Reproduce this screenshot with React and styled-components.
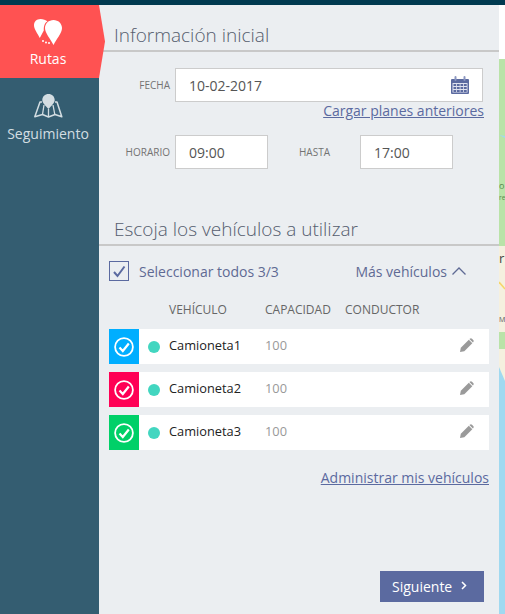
import React from "react";
import styled, { createGlobalStyle } from "styled-components";

const Global = createGlobalStyle`
  html, body { margin: 0; padding: 0; background: #fff; }
  body { font-family: "Open Sans", "Liberation Sans", sans-serif; }
  a { color: inherit; }
`;

const Page = styled.div`
  width: 505px; height: 614px; overflow: hidden;
  display: grid; grid-template-rows: 5px 1fr; grid-template-columns: 99px 400px 6px;
`;
const TopBar = styled.div`grid-column: 1 / -1; background: #003a50;`;
const Sidebar = styled.nav`background: #345d71; display: flex; flex-direction: column; position: relative; z-index: 1;`;
const NavItem = styled.a`
  display: flex; flex-direction: column; align-items: center; box-sizing: border-box;
  height: ${p => p.$active ? 73 : 72}px;
  padding: ${p => p.$active ? 13 : 15}px 3px 0 0;
  position: relative;
  color: ${p => p.$active ? "#fff" : "#d3dde2"};
  background: ${p => p.$active ? "#ff5252" : "transparent"};
  font-size: 14px; line-height: 19px;
  span { margin-top: ${p => p.$active ? 4 : 5}px; }
  ${p => p.$active && `&::after {
    content: ""; position: absolute; left: 99px; top: 0; width: 6px; height: 73px;
    background: #ff5252; clip-path: polygon(0 0, 100% 50%, 0 100%);
  }`}
`;
const Panel = styled.main`background: #ebeef1; display: flex; flex-direction: column; position: relative;`;
const SectionTitle = styled.h2`
  margin: 0; height: ${p => p.$h}px; box-sizing: border-box; border-bottom: 2px solid #c8c8c8;
  padding-left: 15px; font-weight: 300; font-size: 19px; line-height: 27px; color: #555d6e;
  display: flex; align-items: flex-end; padding-bottom: 1px;
`;
const Fields = styled.div`display: flex; flex-direction: column; padding-top: 16px; height: 143px; box-sizing: border-box;`;
const FieldRow = styled.div`display: flex; align-items: center; height: 34px;`;
const Label = styled.label`
  width: ${p => p.$w}px; padding-right: ${p => p.$pr ?? 5}px; box-sizing: border-box; text-align: ${p => p.$left ? "left" : "right"};
  padding-left: ${p => p.$left ? 31 : 0}px;
  font-size: 10px; color: #737373;
`;
const Input = styled.div`
  width: ${p => p.$w}px; height: 34px; box-sizing: border-box; background: #fff; border: 1px solid #ccc;
  padding: 0 13px; display: flex; align-items: center; justify-content: space-between;
  font-size: 14px; color: #555;
`;
const LinkRow = styled.div`
  display: flex; justify-content: flex-end; padding-right: ${p => p.$pr}px; font-size: 14px; line-height: 20px; color: #5b6aa0;
  margin: ${p => p.$m};
  a { text-decoration: underline; }
`;
const SelectRow = styled.div`display: flex; align-items: center; padding: 15px 0 0 10px; height: 20px; font-size: 14px; color: #5f6a94;`;
const CheckBox = styled.div`width: 20px; height: 20px; box-sizing: border-box; border: 1px solid #5b6aa0; display: flex; align-items: center; justify-content: center; margin-right: 10px;`;
const More = styled.div`margin-left: auto; margin-right: 33px; display: flex; align-items: center; gap: 5px;`;
const TableHead = styled.div`
  display: grid; grid-template-columns: 96px 80px 1fr; padding: 20px 0 0 70px; height: 17px; line-height: 17px;
  font-size: 12px; color: #666;
`;
const Rows = styled.div`display: flex; flex-direction: column; gap: 8px; padding: 11px 10px 0;`;
const Row = styled.div`display: flex; align-items: center; height: 35px; background: #fff; font-size: 12.800px; color: #222;`;
const Swatch = styled.div`width: 30px; height: 35px; background: ${p => p.$c}; display: flex; align-items: center; justify-content: center; margin-right: 9px;`;
const Dot = styled.i`width: 12px; height: 12px; border-radius: 50%; background: #42d6c0; margin-right: 9px;`;
const Name = styled.div`width: 96px; margin-bottom: 3px;`;
const Cap = styled.div`color: #999; margin-bottom: 3px;`;
const Edit = styled.div`margin: 0 15px 3px auto; display: flex;`;
const Footer = styled.div`display: flex; justify-content: flex-end; margin-top: auto; padding: 0 15px 12px 0;`;
const NextButton = styled.button`
  width: 104px; height: 31px; border: 0; background: #5b6aa0; color: #fff; font: 14px "Open Sans", sans-serif;
  display: flex; align-items: center; padding: 0 0 0 12px; gap: 9px;
  svg { margin-bottom: 3px; }
`;
const MapStrip = styled.svg`display: block; width: 6px; height: 609px;`;
const MapLabel = styled.text`font: ${p => p.$s}px "Open Sans", sans-serif; fill: ${p => p.$c};`;

const Balloons = () => (
  <svg width="30" height="27" viewBox="0 0 30 27">
    <path d="M7.500 1C3.500 1 1 3.800 1 7.200c0 4 3.500 8 5.800 12.800l4-7.500C10.600 8.500 11.500 4.800 14.500 3.600 13 2 10 1 7.500 1z" fill="#fff"/>
    <path d="M20.500 2c-4.700 0-8.500 3.600-8.500 8 0 5 5.500 11 8.500 17 3-6 8.500-12 8.500-17 0-4.400-3.800-8-8.500-8z" fill="#fff"/>
    <g fill="#fff"><circle cx="10" cy="23" r="1"/><circle cx="13" cy="24.500" r="1"/><circle cx="16" cy="25" r="1"/></g>
  </svg>
);
const MapIcon = () => (
  <svg width="30" height="26" viewBox="0 0 30 26" fill="none">
    <path d="M9 9H7L1.800 23.800l7.700-2.300 6 2.500 6.500-2.500 6.800 2.300L24 9h-2" stroke="#d3dde2" strokeWidth="1.500" strokeLinejoin="round"/>
    <path d="M9.500 21.500 11 12M15.500 24V16M21.800 21.500 20 12" stroke="#d3dde2" strokeWidth="1.300"/>
    <path d="M15.500 1C12 1 9.300 3.600 9.300 7c0 3.200 3.600 6 6.200 9 2.600-3 6.200-5.800 6.200-9 0-3.400-2.700-6-6.200-6z" fill="#d3dde2"/>
  </svg>
);
const Calendar = () => (
  <svg width="18" height="18" viewBox="0 0 18 18">
    <path d="M1 3h16a1 1 0 0 1 1 1v13a1 1 0 0 1-1 1H1a1 1 0 0 1-1-1V4a1 1 0 0 1 1-1z" fill="#5b6aa0"/>
    <rect x="1.500" y="7" width="15" height="9.500" fill="#dfe2ef"/>
    <rect x="3.500" y="0" width="2" height="5" rx="1" fill="#8b96c0"/><rect x="12.500" y="0" width="2" height="5" rx="1" fill="#8b96c0"/>
    <g fill="#5b6aa0">
      {[2.500, 6, 9.500, 13].map(x => [8, 11, 14].map(y => <rect key={x + "-" + y} x={x} y={y} width="2.700" height="2"/>))}
    </g>
  </svg>
);
const Tick = () => (
  <svg width="14" height="13" viewBox="0 0 14 13" fill="none"><path d="M2 7l3.500 4L12.500 1.500" stroke="#5b6aa0" strokeWidth="2"/></svg>
);
const Chevron = () => (
  <svg width="14" height="8" viewBox="0 0 14 8" fill="none"><path d="M.5 7.500 7 1l6.500 6.500" stroke="#5f6a94" strokeWidth="1.300"/></svg>
);
const RoundCheck = () => (
  <svg width="20" height="20" viewBox="0 0 20 20" fill="none">
    <circle cx="10" cy="10" r="8.900" stroke="#fff" strokeWidth="1.800"/>
    <path d="M5.500 10.500l3.300 3.500 6-7.500" stroke="#fff" strokeWidth="2.200"/>
  </svg>
);
const Pencil = () => (
  <svg width="14" height="14" viewBox="0 0 14 14">
    <path d="M0 14l.8-4.300L8.800 1.700l3.500 3.500L4.300 13.200z" fill="#9a9a9a"/>
    <path d="M9.800.8c.8-.8 1.500-.8 2.200 0l1.200 1.200c.7.700.7 1.400 0 2.200l-.3.200L9.400 1z" fill="#9a9a9a"/>
  </svg>
);
const NextIcon = () => (
  <svg width="6" height="9" viewBox="0 0 6 9" fill="none"><path d="M1 1l3.500 3.500L1 8" stroke="#fff" strokeWidth="1.500"/></svg>
);

const vehicles = [
  { name: "Camioneta1", color: "#00aeff" },
  { name: "Camioneta2", color: "#ff0055" },
  { name: "Camioneta3", color: "#00d068" },
];

export default function App() {
  return (
    <Page>
      <Global />
      <TopBar />
      <Sidebar>
        <NavItem $active><Balloons /><span>Rutas</span></NavItem>
        <NavItem><MapIcon /><span>Seguimiento</span></NavItem>
      </Sidebar>
      <Panel>
        <SectionTitle $h={47}>Información inicial</SectionTitle>
        <Fields>
          <FieldRow>
            <Label $w={76}>FECHA</Label>
            <Input $w={308}>10-02-2017<Calendar /></Input>
          </FieldRow>
          <LinkRow $pr={15} $m="-1px 0 14px"><a>Cargar planes anteriores</a></LinkRow>
          <FieldRow>
            <Label $w={76}>HORARIO</Label>
            <Input $w={93}>09:00</Input>
            <Label $w={92} $left $pr={0}>HASTA</Label>
            <Input $w={93}>17:00</Input>
          </FieldRow>
        </Fields>
        <SectionTitle $h={51}>Escoja los vehículos a utilizar</SectionTitle>
        <SelectRow>
          <CheckBox><Tick /></CheckBox>
          Seleccionar todos 3/3
          <More>Más vehículos <Chevron /></More>
        </SelectRow>
        <TableHead><div>VEHÍCULO</div><div>CAPACIDAD</div><div>CONDUCTOR</div></TableHead>
        <Rows>
          {vehicles.map(v => (
            <Row key={v.name}>
              <Swatch $c={v.color}><RoundCheck /></Swatch>
              <Dot />
              <Name>{v.name}</Name>
              <Cap>100</Cap>
              <Edit><Pencil /></Edit>
            </Row>
          ))}
        </Rows>
        <LinkRow $pr={10} $m="18px 0 0"><a>Administrar mis vehículos</a></LinkRow>
        <Footer><NextButton>Siguiente <NextIcon /></NextButton></Footer>
      </Panel>
      <MapStrip viewBox="0 0 6 609" aria-hidden="true">
        <rect width="6" height="609" fill="#fff"/>
        <rect y="54" width="6" height="187" fill="#b9e3a8"/>
        <path d="M0 130l6 3v-2z" fill="#a0d9f0"/>
        <MapLabel x="0" y="184" $s={9} $c="#5a8a4a">o</MapLabel>
        <MapLabel x="0" y="195" $s={6.500} $c="#5a8a4a">re</MapLabel>
        <rect y="241" width="6" height="86" fill="#f5f0df"/>
        <MapLabel x="0" y="258" $s={13} $c="#444">r</MapLabel>
        <path d="M0 277l6 7" stroke="#f6d66b" strokeWidth="1.500"/>
        <MapLabel x="0" y="317" $s={7} $c="#555">M</MapLabel>
        <rect y="327" width="6" height="17" fill="#b9e3a8"/>
        <rect y="344" width="6" height="40" fill="#f5f0df"/>
        <path d="M0 362l6 14v233H0z" fill="#a0d9f0"/>
      </MapStrip>
    </Page>
  );
}
